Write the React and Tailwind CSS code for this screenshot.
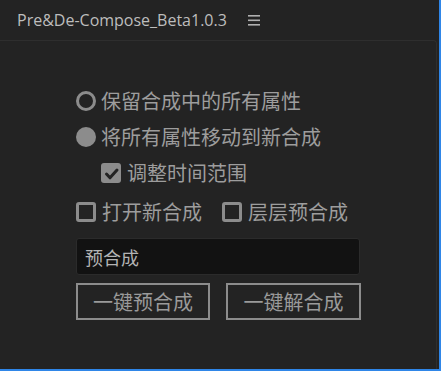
import React, { useState } from "react";

const cjk = { fontFamily: '"Noto Sans CJK SC", "Noto Sans", sans-serif' };

const Radio = ({ checked, label, onClick }) => (
  <div className="flex items-center h-[36px] cursor-pointer" onClick={onClick}>
    {checked ? (
      <span className="w-[20px] h-[20px] rounded-full bg-[#8c8c8c]" />
    ) : (
      <span className="w-[20px] h-[20px] rounded-full border-[3px] border-[#8c8c8c]" />
    )}
    <span className="ml-[5px] text-[20px] leading-none text-[#9d9d9d]">{label}</span>
  </div>
);

const Check = ({ checked, label, onClick }) => (
  <div className="flex items-center h-[36px] cursor-pointer" onClick={onClick}>
    {checked ? (
      <span className="w-[20px] h-[20px] rounded-[3px] bg-[#8c8c8c] flex items-center justify-center">
        <svg width="20" height="20" viewBox="0 0 20 20">
          <path d="M5.5 11 L9 14.8 L16 7" fill="none" stroke="#232323" strokeWidth="3" strokeLinecap="round" strokeLinejoin="round" />
        </svg>
      </span>
    ) : (
      <span className="w-[20px] h-[20px] rounded-[3px] border-[3px] border-[#8c8c8c]" />
    )}
    <span className="ml-[6px] text-[20px] leading-none text-[#9d9d9d]">{label}</span>
  </div>
);

export default function App() {
  const [keep, setKeep] = useState(false);
  const [adjust, setAdjust] = useState(true);
  const [openNew, setOpenNew] = useState(false);
  const [layered, setLayered] = useState(false);
  const [name, setName] = useState("预合成");

  return (
    <div className="w-[441px] h-[371px] bg-[#232323] flex flex-col border-r-2 border-b-2 border-[#2f86e8] overflow-hidden">
      {/* title bar */}
      <div className="h-[40px] flex items-center pl-[17px] shrink-0">
        <span className="text-[16px] text-[#bdbdbd]" style={{ fontFamily: '"Open Sans", sans-serif' }}>
          Pre&amp;De-Compose_Beta1.0.3
        </span>
        <svg className="ml-[21px]" width="12" height="12" viewBox="0 0 12 12">
          <rect x="0" y="1" width="12" height="1.6" fill="#b0b0b0" />
          <rect x="0" y="5.5" width="12" height="1.6" fill="#b0b0b0" />
          <rect x="0" y="10" width="12" height="1.6" fill="#b0b0b0" />
        </svg>
      </div>

      {/* panel */}
      <div className="flex-1 w-[437px] border-t border-r border-[#2e2e2e] rounded-tr-[4px] pl-[76px] pt-[42px]" style={cjk}>
        <Radio checked={keep} label="保留合成中的所有属性" onClick={() => setKeep(true)} />
        <Radio checked={!keep} label="将所有属性移动到新合成" onClick={() => setKeep(false)} />
        <div className="pl-[25px]">
          <Check checked={adjust} label="调整时间范围" onClick={() => setAdjust(!adjust)} />
        </div>
        <div className="flex items-center gap-[20px] mt-[3px]">
          <Check checked={openNew} label="打开新合成" onClick={() => setOpenNew(!openNew)} />
          <Check checked={layered} label="层层预合成" onClick={() => setLayered(!layered)} />
        </div>

        <input
          value={name}
          onChange={(e) => setName(e.target.value)}
          className="mt-[8px] w-[284px] h-[37px] bg-[#121212] border border-[#2b2b2b] rounded-[3px] pl-[8px] text-[18px] text-[#b4b4b4] outline-none"
          style={cjk}
        />

        <div className="flex gap-[16px] mt-[8px]">
          <button className="w-[134px] h-[37px] border-2 border-[#8c8c8c] text-[20px] text-[#9a9a9a] leading-none">
            一键预合成
          </button>
          <button className="w-[135px] h-[37px] border-2 border-[#8c8c8c] text-[20px] text-[#9a9a9a] leading-none">
            一键解合成
          </button>
        </div>
      </div>
    </div>
  );
}
